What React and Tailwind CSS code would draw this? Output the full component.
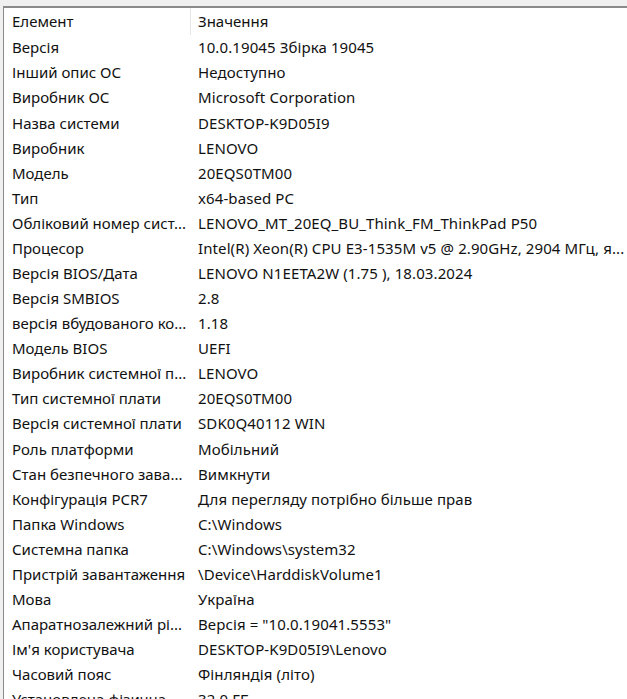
const rows = [
  ["Версія", "10.0.19045 Збірка 19045"],
  ["Інший опис ОС", "Недоступно"],
  ["Виробник ОС", "Microsoft Corporation"],
  ["Назва системи", "DESKTOP-K9D05I9"],
  ["Виробник", "LENOVO"],
  ["Модель", "20EQS0TM00"],
  ["Тип", "x64-based PC"],
  ["Обліковий номер сист...", "LENOVO_MT_20EQ_BU_Think_FM_ThinkPad P50"],
  ["Процесор", "Intel(R) Xeon(R) CPU E3-1535M v5 @ 2.90GHz, 2904 МГц, я..."],
  ["Версія BIOS/Дата", "LENOVO N1EETA2W (1.75 ), 18.03.2024"],
  ["Версія SMBIOS", "2.8"],
  ["версія вбудованого ко...", "1.18"],
  ["Модель BIOS", "UEFI"],
  ["Виробник системної п...", "LENOVO"],
  ["Тип системної плати", "20EQS0TM00"],
  ["Версія системної плати", "SDK0Q40112 WIN"],
  ["Роль платформи", "Мобільний"],
  ["Стан безпечного зава...", "Вимкнути"],
  ["Конфігурація PCR7", "Для перегляду потрібно більше прав"],
  ["Папка Windows", "C:\\Windows"],
  ["Системна папка", "C:\\Windows\\system32"],
  ["Пристрій завантаження", "\\Device\\HarddiskVolume1"],
  ["Мова", "Україна"],
  ["Апаратнозалежний рі...", "Версія = \"10.0.19041.5553\""],
  ["Ім'я користувача", "DESKTOP-K9D05I9\\Lenovo"],
  ["Часовий пояс", "Фінляндія (літо)"],
  ["Установлена фізична ...", "32,0 ГБ"],
];

export default function App() {
  return (
    <div
      className="w-[627px] h-[699px] overflow-hidden bg-[#f0f0f0] text-[15px] text-[#111]"
      style={{ fontFamily: '"Noto Sans", "Open Sans", sans-serif' }}
    >
      <div className="ml-[3px] mt-[6px] h-[693px] bg-white border-l border-t-2 border-[#8a8a8a] overflow-hidden">
        {/* Header */}
        <div className="flex h-[27px] items-center">
          <div className="w-[186px] pl-[8px] whitespace-nowrap">Елемент</div>
          <div className="w-px h-full bg-[#e5e5e5]" />
          <div className="pl-[7px] whitespace-nowrap">Значення</div>
        </div>
        {rows.map(([k, v], i) => (
          <div key={i} className="flex h-[25.08px] items-center">
            <div className="w-[187px] pl-[8px] whitespace-nowrap overflow-hidden">{k}</div>
            <div className="pl-[7px] whitespace-nowrap tracking-[0.1px]">{v}</div>
          </div>
        ))}
      </div>
    </div>
  );
}
